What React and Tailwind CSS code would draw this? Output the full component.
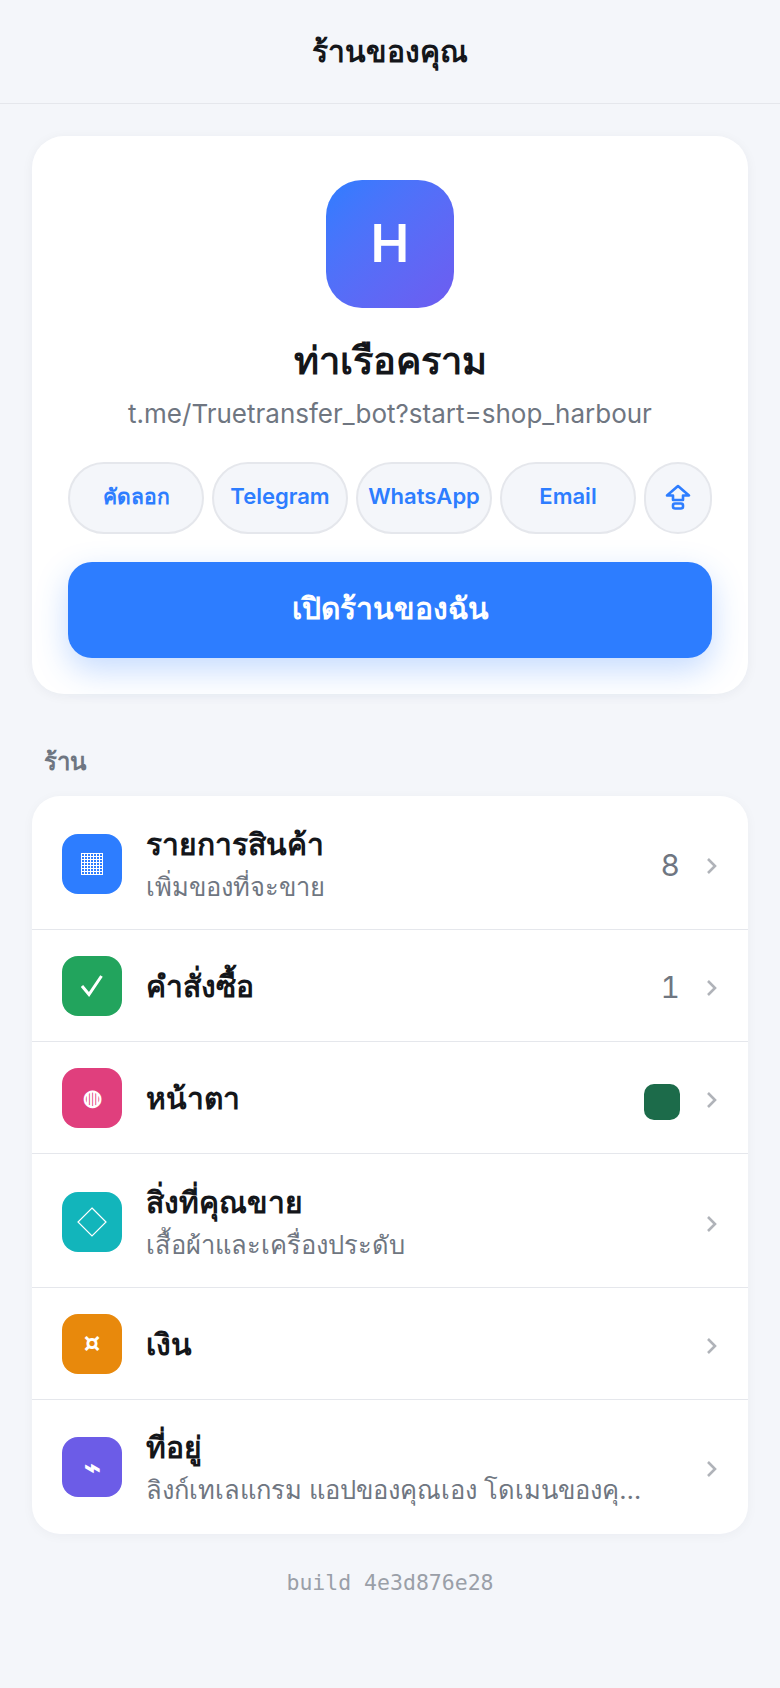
const font = { fontFamily: 'Inter, "Noto Sans", "Liberation Sans", sans-serif' };

function Share() {
  return (
    <svg width="26" height="26" viewBox="0 0 26 26" fill="none" stroke="#2d7dff" strokeWidth="2.6" strokeLinejoin="round">
      <path d="M13 2 L24 11.5 H18 V16 H8 V11.5 H2 Z" />
      <rect x="8" y="19.5" width="10" height="5" rx="2" />
    </svg>
  );
}

function Chevron() {
  return (
    <svg className="ml-[24px] mt-[5px] shrink-0" width="14" height="20" viewBox="0 0 14 20" fill="none" stroke="#b0b3b9" strokeWidth="2.6">
      <path d="M4 3 L11 10 L4 17" />
    </svg>
  );
}

function GridIcon() {
  const lines = [0.5, 3.5, 6.5, 9.5, 12.5, 15.5, 18.5, 21.5];
  return (
    <svg width="22" height="22" viewBox="0 0 22 22" stroke="white" strokeWidth="1">
      {lines.map((p) => (
        <g key={p}>
          <line x1={p} y1="0" x2={p} y2="22" />
          <line x1="0" y1={p} x2="22" y2={p} />
        </g>
      ))}
    </svg>
  );
}

function CheckIcon() {
  return (
    <svg width="22" height="22" viewBox="0 0 22 22" fill="none" stroke="white" strokeWidth="3">
      <path d="M1 11 L8 19.5 L20.5 1" />
    </svg>
  );
}

function DiamondIcon() {
  return (
    <svg width="30" height="30" viewBox="0 0 30 30" fill="none" stroke="white" strokeWidth="1.2">
      <path d="M15 1 L29 15 L15 29 L1 15 Z" />
    </svg>
  );
}

function Pill({ children, wide = true, small = false }) {
  return (
    <div className={`${wide ? "flex-1" : "w-[68px] shrink-0"} h-[72px] pb-[3px] rounded-[36px] border-2 border-[#e5e7ec] bg-[#f4f6fa] flex items-center justify-center font-semibold text-[#2d7dff] ${small ? "text-[21px]" : "text-[22px]"}`}>
      {children}
    </div>
  );
}

function Row({ color, glyph, glyphClass = "", title, sub, right, last }) {
  return (
    <div className={`flex items-center px-[30px] ${sub ? "h-[134px]" : "h-[112px]"} ${last ? "pb-[1px]" : "border-b border-[#e5e7ec]"} ${sub && !last ? "pt-[2px]" : ""}`}>
      <div className={`w-[60px] h-[60px] rounded-[16px] flex items-center justify-center text-white shrink-0 font-semibold ${color} ${glyphClass}`}>{glyph}</div>
      <div className="ml-[24px] flex-1 min-w-0">
        <div className="text-[30px] leading-[44px] font-semibold text-[#14161a]">{title}</div>
        {sub && <div className="mt-[3px] pr-[34px] text-[25.5px] leading-[36px] text-[#6f7681] truncate">{sub}</div>}
      </div>
      {right}
      <Chevron />
    </div>
  );
}

const Count = ({ n }) => <span className="mt-[4px] text-[30px] tabular-nums text-[#6f7681]">{n}</span>;

export default function App() {
  return (
    <div style={font} className="min-h-[1688px] bg-[#f4f6fa] flex flex-col">
      <header className="h-[104px] border-b border-[#e5e7ec] flex items-center justify-center text-[30px] font-semibold text-[#14161a]">ร้านของคุณ</header>
      <main className="px-[32px] pt-[32px] flex flex-col">
        <section className="bg-white rounded-[32px] px-[36px] pt-[44px] pb-[36px] flex flex-col items-center shadow-[0_2px_12px_rgba(20,30,60,0.05)]">
          <div className="w-[128px] h-[128px] rounded-[36px] bg-gradient-to-br from-[#2d7dff] to-[#6d5cf0] flex items-center justify-center text-white text-[52px] font-semibold">H</div>
          <h1 className="mt-[26px] text-[38px] leading-[52px] font-bold text-[#14161a]">ท่าเรือคราม</h1>
          <p className="mt-[10px] text-[26px] leading-[36px] text-[#6f7681]">t.me/Truetransfer_bot?start=shop_harbour</p>
          <div className="mt-[30px] w-full flex gap-[8px]">
            <Pill small>คัดลอก</Pill>
            <Pill>Telegram</Pill>
            <Pill>WhatsApp</Pill>
            <Pill>Email</Pill>
            <Pill wide={false}><Share /></Pill>
          </div>
          <button className="mt-[28px] w-full h-[96px] pb-[3px] rounded-[24px] bg-[#2d7dff] text-white text-[30px] font-semibold shadow-[0_12px_32px_rgba(45,125,255,0.28)]">เปิดร้านของฉัน</button>
        </section>
        <div className="mt-[50px] px-[12px] h-[36px] leading-[36px] text-[24px] font-semibold text-[#6f7681]">ร้าน</div>
        <section className="mt-[16px] bg-white rounded-[28px] overflow-hidden shadow-[0_2px_12px_rgba(20,30,60,0.04)]">
          <Row color="bg-[#2d7dff]" glyph={<GridIcon />} title="รายการสินค้า" sub="เพิ่มของที่จะขาย" right={<Count n="8" />} />
          <Row color="bg-[#22a45d]" glyph={<CheckIcon />} title="คำสั่งซื้อ" right={<Count n="1" />} />
          <Row color="bg-[#e03f7d]" glyph="◍" glyphClass="text-[22px]" title="หน้าตา" right={<div className="mt-[9px] w-[36px] h-[36px] rounded-[10px] bg-[#1c6b4a]" />} />
          <Row color="bg-[#12b5bb]" glyph={<DiamondIcon />} title="สิ่งที่คุณขาย" sub="เสื้อผ้าและเครื่องประดับ" />
          <Row color="bg-[#e8890c]" glyph="¤" glyphClass="text-[26px] font-bold font-['DejaVu_Sans',sans-serif]" title="เงิน" />
          <Row last color="bg-[#6c5ce7]" glyph="⌁" glyphClass="text-[28px]" title="ที่อยู่" sub="ลิงก์เทเลแกรม แอปของคุณเอง โดเมนของคุณ และอื่น ๆ" />
        </section>
        <div className="mt-[33px] text-center text-[21.5px] leading-[32px] text-[#9a9fa8] font-['DejaVu_Sans_Mono',monospace]">build 4e3d876e28</div>
      </main>
    </div>
  );
}
